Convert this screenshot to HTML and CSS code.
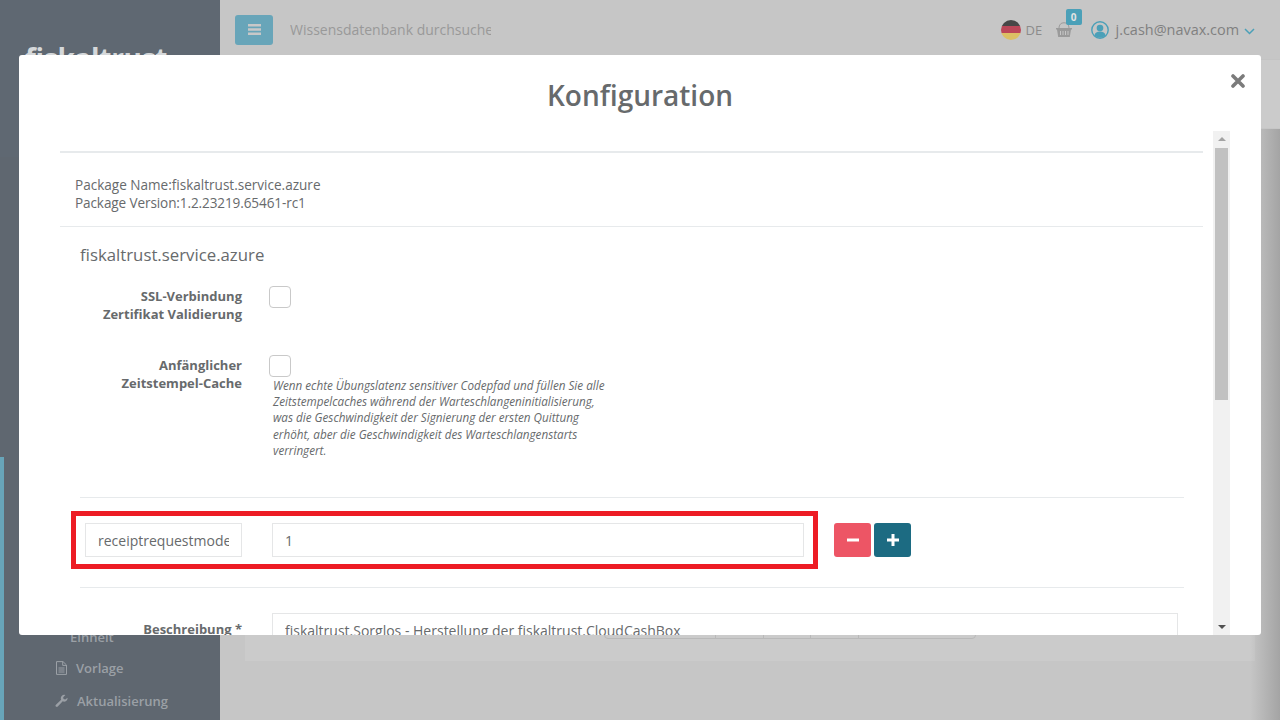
FILE: index.html
```html
<!DOCTYPE html>
<html lang="de">
<head>
<meta charset="utf-8">
<title>Konfiguration</title>
<link rel="stylesheet" href="styles.css">
</head>
<body>
<div class="app">
  <aside class="sidebar">
    <div class="brand"><span class="logo">fiskaltrust</span></div>
    <div class="nav-spacer"><span class="nav-accent"></span></div>
    <nav class="nav">
      <div class="nav-sub">Einheit</div>
      <div class="nav-item">
        <svg class="nav-icon" viewBox="0 0 12 14"><path d="M1 .6h6.5L11 4v9.400H1zM7.200 1v3.400H11M3 7h6M3 9h6M3 11h6" fill="none" stroke="currentColor"/></svg>
        <span>Vorlage</span>
      </div>
      <div class="nav-item wide">
        <svg class="nav-icon" viewBox="0 0 14 14"><path d="M13.500 3.400a3.800 3.800 0 0 1-5.200 4L3 13a1.400 1.400 0 0 1-2-2l5.600-5.300a3.800 3.800 0 0 1 4.600-5.200L8.800 3l.4 1.900 1.900.4z" fill="currentColor"/></svg>
        <span>Aktualisierung</span>
      </div>
    </nav>
  </aside>
  <main class="main">
    <header class="topbar">
      <button class="menu-btn" type="button" aria-label="Menü">
        <svg viewBox="0 0 13 11" width="13" height="11"><path d="M0 0h13v2.400H0zM0 4.300h13v2.400H0zM0 8.600h13V11H0z" fill="#c8c8c8"/></svg>
      </button>
      <div class="search">Wissensdatenbank durchsuche</div>
      <div class="top-right">
        <span class="flag"><i class="f1"></i><i class="f2"></i><i class="f3"></i></span>
        <span class="lang">DE</span>
        <span class="cart">
          <svg viewBox="0 0 16 15" width="16" height="15"><path d="M3 6.500C3 2.500 5 .8 8 .8s5 1.700 5 5.700" fill="none" stroke="#9a9a9a"/><path d="M0 6h16v1.500h-1L13.800 15H2.200L1 7.500H0z" fill="#9a9a9a"/><path d="M4.500 9v4M7 9v4M9.500 9v4M12 9v4" stroke="#c6c6c6"/></svg>
          <span class="badge">0</span>
        </span>
        <svg class="user" viewBox="0 0 18 18" width="18" height="18"><circle cx="9" cy="9" r="8.200" fill="none" stroke="#4ba0b8" stroke-width="1.400"/><circle cx="9" cy="7" r="3.300" fill="#4ba0b8"/><path d="M3.500 14.500c.5-3 2.500-4 5.500-4s5 1 5.500 4A8 8 0 0 1 9 16.800a8 8 0 0 1-5.500-2.300z" fill="#4ba0b8"/></svg>
        <span class="email">j.cash@navax.com</span>
        <svg class="chev" viewBox="0 0 11 7" width="11" height="7"><path d="M1 1l4.500 4.500L10 1" fill="none" stroke="#4ba0b8" stroke-width="1.500"/></svg>
      </div>
    </header>
    <div class="heading-band"></div>
    <section class="panel">
      <div class="pager"><span></span><span></span><span></span><span></span><span></span></div>
    </section>
    <div class="edge"></div>
  </main>
</div>

<div class="modal">
  <h2 class="modal-title">Konfiguration</h2>
  <button class="close" type="button" aria-label="Schließen">
    <svg viewBox="0 0 14 14" width="14" height="14"><path d="M2 2l10 10M12 2L2 12" stroke="#7b7b7b" stroke-width="3.600" stroke-linecap="round" fill="none"/></svg>
  </button>
  <div class="modal-body">
    <div class="content">
      <div class="pkg">
        <div>Package Name:fiskaltrust.service.azure</div>
        <div class="pkg-ver">Package Version:1.2.23219.65461-rc1</div>
      </div>
      <div class="form">
        <h3 class="sec-title">fiskaltrust.service.azure</h3>
        <div class="field field-a">
          <label class="lbl">SSL-Verbindung Zertifikat Validierung</label>
          <div class="ctl"><span class="check"></span></div>
        </div>
        <div class="field field-b">
          <label class="lbl">Anfänglicher Zeitstempel-Cache</label>
          <div class="ctl">
            <span class="check"></span>
            <p class="help">Wenn echte Übungslatenz sensitiver Codepfad und füllen Sie alle Zeitstempelcaches während der Warteschlangeninitialisierung, was die Geschwindigkeit der Signierung der ersten Quittung erhöht, aber die Geschwindigkeit des Warteschlangenstarts verringert.</p>
          </div>
        </div>
        <div class="kv">
          <span class="marker"></span>
          <input class="input key" type="text" value="receiptrequestmode" readonly>
          <input class="input val" type="text" value="1" readonly>
          <div class="btns">
            <button class="btn minus" type="button" aria-label="Entfernen"><svg viewBox="0 0 12 12" width="12" height="12"><path d="M0 4.500h12v3H0z" fill="#fff"/></svg></button>
            <button class="btn plus" type="button" aria-label="Hinzufügen"><svg viewBox="0 0 12 12" width="12" height="12"><path d="M4.500 0h3v4.500H12v3H7.500V12h-3V7.500H0v-3h4.500z" fill="#fff"/></svg></button>
          </div>
        </div>
        <div class="field field-c">
          <label class="lbl">Beschreibung *</label>
          <input class="input desc" type="text" value="fiskaltrust.Sorglos - Herstellung der fiskaltrust.CloudCashBox" readonly>
        </div>
      </div>
    </div>
    <div class="scrollbar">
      <span class="arrow up"></span>
      <span class="thumb"></span>
      <span class="arrow down"></span>
    </div>
  </div>
</div>
</body>
</html>
```
FILE: styles.css
```css
* { box-sizing: border-box; }
html, body { margin: 0; height: 100%; overflow: hidden; }
body { font-family: "Open Sans", sans-serif; color: #676a6c; background: #c6c6c6; }

.app { display: flex; height: 720px; }
.sidebar { width: 220px; background: #5f6770; display: flex; flex-direction: column; flex: none; color: #9ba0a6; }
.brand { height: 157px; padding: 38px 0 0 25px; background: #5f6872; }
.logo { font-size: 28px; font-weight: 700; color: #d5d8da; line-height: 40px; letter-spacing: -.3px; }
.nav-spacer { height: 466px; position: relative; }
.nav-accent { position: absolute; left: 0; top: 300px; bottom: -97px; width: 4px; background: #68a5b9; }
.nav { font-size: 13px; font-weight: 600; position: relative; }
.nav-sub { padding: 5px 0 0 70px; height: 28px; line-height: 18px; }
.nav-item { height: 33px; display: flex; align-items: center; gap: 8px; padding-left: 55px; }
.nav-item.wide { gap: 9px; }
.nav-icon { width: 13px; height: 14px; flex: none; }

.main { flex: 1; position: relative; display: flex; flex-direction: column; }
.topbar { height: 60px; display: flex; align-items: center; padding: 0 25px 0 15px; flex: none; border-bottom: 1px solid #c3c3c3; }
.menu-btn { width: 38px; height: 30px; background: #68a5b9; border: 0; border-radius: 3px; padding: 0; display: flex; align-items: center; justify-content: center; }
.search { margin-left: 17px; width: 201px; overflow: hidden; white-space: nowrap; font-size: 14px; color: #999; }
.top-right { margin-left: auto; display: flex; align-items: center; }
.flag { width: 20px; height: 20px; border-radius: 50%; overflow: hidden; display: flex; flex-direction: column; }
.flag i { flex: 1; display: block; }
.f1 { background: #474747; }
.f2 { background: #bb4658; }
.f3 { background: #dcc064; }
.lang { margin-left: 5px; font-size: 13px; color: #8b8b8b; width: 30px; }
.cart { position: relative; width: 16px; height: 15px; display: block; margin-right: 19px; }
.cart svg { display: block; }
.badge { position: absolute; left: 10px; top: -13px; width: 16px; height: 16px; background: #4ba0b8; border-radius: 2px; color: #e3e3e3; font-size: 10px; font-weight: 700; line-height: 16px; text-align: center; }
.user { margin-right: 7px; }
.email { font-size: 14.450px; font-weight: 500; color: #808080; }
.chev { margin-left: 5px; margin-top: 3px; }

.heading-band { height: 68px; flex: none; background: #cbcbcb; }
.panel { margin-left: 25px; width: 1010px; flex: none; height: 533px; background: #cbcbcb; position: relative; }
.pager { position: absolute; left: 359px; top: 467px; width: 372px; height: 44px; border: 1px solid #b9b9b9; border-radius: 4px; display: flex; }
.pager span { border-right: 1px solid #b9b9b9; width: 47.500px; }
.pager span:first-child { width: 111px; }
.pager span:last-child { border-right: 0; }
.edge { position: absolute; right: 0; top: 129px; bottom: 0; width: 30px; background: linear-gradient(to right, rgba(164,164,164,0), #a4a4a4); }

.modal { position: absolute; left: 19px; top: 55px; width: 1242px; height: 580px; background: #fff; border-radius: 3px; overflow: hidden; }
.modal-title { margin: 20px 0 0; text-align: center; font-size: 28px; font-weight: 600; line-height: 40px; color: #676a6c; }
.close { position: absolute; right: 16px; top: 19px; width: 14px; height: 14px; border: 0; padding: 0; background: none; display: block; }
.close svg { display: block; }
.modal-body { position: absolute; left: 41px; top: 76px; right: 31px; bottom: 0; overflow: hidden; }
.content { width: 1143px; border-top: 2px solid #e7eaec; margin-top: 20px; }
.pkg { padding: 23px 15px 14px; font-size: 13.550px; font-weight: 500; line-height: 18px; border-bottom: 1px solid #e7eaec; color: #676a6c; }
.pkg-ver { letter-spacing: -.1px; }
.form { padding: 0 19px 0 20px; }
.sec-title { margin: 17px 0 0; font-size: 16.800px; font-weight: 500; line-height: 22px; color: #676a6c; }
.field { display: flex; }
.lbl { width: 162px; flex: none; text-align: right; font-size: 13px; font-weight: 700; line-height: 18px; color: #676a6c; }
.ctl { margin-left: 27px; }
.field-a { margin-top: 20px; padding-top: 1px; height: 70px; }
.field-b { height: 141px; }
.check { display: block; width: 22px; height: 22px; border: 1px solid #c9c9c9; border-radius: 4px; margin-top: -1px; }
.help { margin: 0 0 0 4px; width: 337px; font-size: 11.700px; font-style: italic; line-height: 16.200px; color: #676a6c; }
.kv { position: relative; height: 91px; border-top: 1px solid #e7eaec; border-bottom: 1px solid #e7eaec; display: flex; align-items: flex-start; padding: 25px 0 0 5px; }
.marker { position: absolute; left: -9px; top: 13px; width: 747px; height: 58px; border: 5px solid #ed1c24; }
.input { display: block; height: 34px; border: 1px solid #e5e6e7; padding: 0 12px; font: 14px "Open Sans", sans-serif; color: #676a6c; background: #fff; outline: 0; border-radius: 0; }
.key { width: 157px; }
.val { width: 532px; margin-left: 30px; }
.btns { display: flex; gap: 3px; margin-left: 30px; }
.btn { width: 37px; height: 34px; border: 0; border-radius: 3px; padding: 0; display: flex; align-items: center; justify-content: center; }
.minus { background: #ed5565; }
.plus { background: #1c6b82; }
.field-c { margin-top: 25px; }
.field-c .lbl { padding-top: 7px; }
.desc { width: 906px; margin-left: 30px; }

.scrollbar { position: absolute; right: 0; top: 0; bottom: 0; width: 17px; background: #f1f1f1; }
.thumb { position: absolute; left: 2px; top: 17px; width: 13px; height: 252px; background: #c1c1c1; }
.arrow { position: absolute; left: 5px; width: 0; height: 0; border-left: 4px solid transparent; border-right: 4px solid transparent; }
.up { top: 6px; border-bottom: 4px solid #a3a3a3; }
.down { bottom: 6px; border-top: 4px solid #505050; }
```
